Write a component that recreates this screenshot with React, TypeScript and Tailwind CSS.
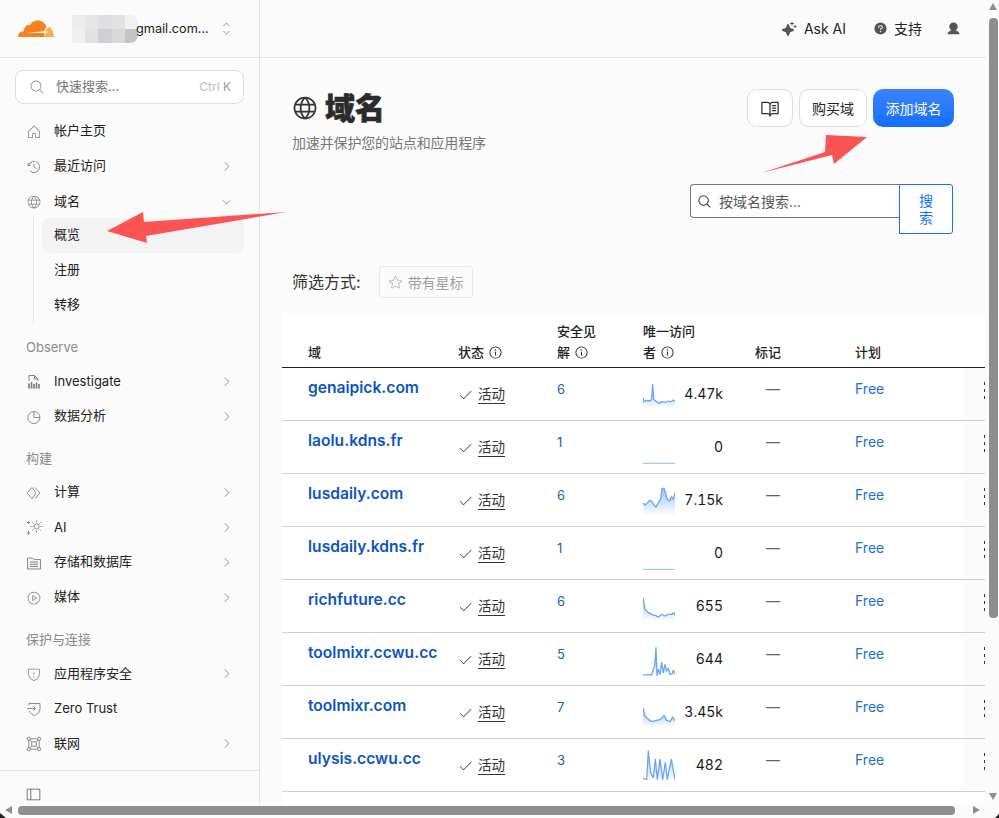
import React from "react";
import {
  PiHouseLight, PiClockCounterClockwiseLight, PiGlobeLight, PiCaretRightLight, PiCaretDownLight,
  PiCaretUpDownLight, PiMagnifyingGlassLight, PiMagnifyingGlass, PiSidebarSimpleLight,
  PiPlayCircleLight, PiShieldWarningLight, PiUserFill, PiQuestionFill, PiSparkleFill, PiStarLight,
  PiInfo, PiCheckLight, PiBookOpenText, PiGlobe,
} from "react-icons/pi";

const Logo = () => (
  <svg width="36" height="17" viewBox="0 0 36 17">
    <path d="M26 17C27 12 28.5 8 31 7C33.5 7.5 35.5 12 36 17Z" fill="#fbad41" />
    <path d="M0 17C0 14 1.5 11.5 5.5 11.5C6.5 6.5 9.5 4 11.5 5.5C13 2 17.5 0 21 0.5C25 1 27.5 3.5 28.5 7C27.5 10 26.5 13 26 17Z" fill="#f6821f" />
    <path d="M8 12.6L25 11.6L25 12.9Z" fill="#fff" />
    <path d="M27 8L27.8 11.2L31 12L27.8 12.8L27 16L26.2 12.8L23 12L26.2 11.2Z" fill="#fff" />
  </svg>
);

const IconFile = () => (
  <svg width="16" height="16" viewBox="0 0 16 16" fill="none" stroke="#808080" strokeWidth="1">
    <path d="M3 7V1.5H8.5L12 5V7M8.5 1.5V5H12" />
    <path d="M3 14.5V9.5M5.5 14.5V8M8 14.5V10M10.5 14.5V8.5M13 14.5V10" strokeWidth="1.7" />
  </svg>
);
const IconPie = () => (
  <svg width="16" height="16" viewBox="0 0 16 16" fill="none" stroke="#808080" strokeWidth="0.9">
    <path d="M7.9 2.5A6 6 0 1 0 13.9 8.5H7.9Z" />
    <path d="M7.9 2.5A6 6 0 0 1 13.9 8.5" />
  </svg>
);
const IconCompute = () => (
  <svg width="16" height="16" viewBox="0 0 16 16" fill="none" stroke="#808080" strokeWidth="0.9">
    <path d="M6 2.5L1 8L6 13.5L10 8Z" />
    <path d="M9 2.5L14 8L9 13.5" />
  </svg>
);
const IconAI = () => (
  <svg width="17" height="17" viewBox="0 0 17 17" fill="none" stroke="#808080" strokeWidth="0.9">
    <circle cx="10.5" cy="7.5" r="2.6" />
    <path d="M10.5 1.5V3.5M10.5 11.5V13.5M4.5 7.5H6.5M14.5 7.5H16.5M6.3 3.3L7.6 4.6M13.4 10.4L14.7 11.7M14.7 3.3L13.4 4.6M7.6 10.4L6.3 11.7" />
    <path d="M2.5 2V5M1 3.5H4M2.5 12V16M0.8 14H4.2" />
  </svg>
);
const IconStorage = () => (
  <svg width="16" height="16" viewBox="0 0 16 16" fill="none" stroke="#808080" strokeWidth="0.9">
    <path d="M1.5 14V3H6.5L8 4.5H14.5V14Z" fill="#f1f1f1" />
    <path d="M4 7H12M4 9.2H12M4 11.4H12" />
  </svg>
);
const IconZero = () => (
  <svg width="16" height="16" viewBox="0 0 16 16" fill="none" stroke="#808080" strokeWidth="0.9">
    <path d="M3 4.5V2.5H14V8C14 11.5 11 13.5 8.5 14.5C6.5 13.8 4.2 12.5 3.4 10" />
    <path d="M1 7.5H9.5M7 5L9.5 7.5L7 10" />
  </svg>
);
const IconNet = () => (
  <svg width="16" height="16" viewBox="0 0 16 16" fill="none" stroke="#808080" strokeWidth="0.9">
    <circle cx="2.8" cy="2.8" r="1.6" />
    <circle cx="13.2" cy="2.8" r="1.6" />
    <circle cx="2.8" cy="13.2" r="1.6" />
    <circle cx="13.2" cy="13.2" r="1.6" />
    <rect x="5.8" y="5.8" width="4.4" height="4.4" />
    <path d="M4.4 2.8H11.6M4.4 13.2H11.6M2.8 4.4V11.6M13.2 4.4V11.6M4 4L5.8 5.8M12 4L10.2 5.8M4 12L5.8 10.2M12 12L10.2 10.2" />
  </svg>
);

const ic = "text-[#808080]";

function NavRow({ icon, label, caret, latin }: { icon: React.ReactNode; label: string; caret?: "r" | "d"; latin?: boolean }) {
  return (
    <div className="flex h-[35px] items-center pl-[26px] pr-[26px] text-[13px] text-[#222]">
      <span className="flex w-[28px] shrink-0 items-center">{icon}</span>
      <span className={latin ? "flex-1" : "flex-1 -translate-y-px"}>{label}</span>
      {caret === "r" && <PiCaretRightLight size={13} className="text-[#8a8a8a]" />}
      {caret === "d" && <PiCaretDownLight size={13} className="text-[#8a8a8a]" />}
    </div>
  );
}

const Section = ({ label }: { label: string }) => (
  <div className="h-[41px] pl-[26px] pt-[14px] text-[13px] leading-[20px] text-[#8a8a8a]">{label}</div>
);

const mosaic = [
  ["#ececec", "#e6e6e8", "#dfdfe2", "#e2e2e4", "#f1f1f2"],
  ["#f0f0f0", "#e2e2e2", "#cfd0d3", "#d9d9db", "#c4c5c9"],
];

function Sidebar() {
  return (
    <aside className="flex h-full w-[260px] shrink-0 flex-col border-r border-[#e4e4e4]">
      <div className="flex h-[58px] shrink-0 items-center border-b border-[#e4e4e4] pl-[18px]">
        <span className="-mt-[1px] shrink-0"><Logo /></span>
        <div className="ml-[18px] flex h-[28px] w-[66px] shrink-0 flex-col overflow-hidden rounded-r-lg">
          {mosaic.map((r, i) => (
            <div key={i} className="flex h-[14px]">
              {r.map((c, j) => (
                <div key={j} className="h-[14px] flex-1" style={{ background: c }} />
              ))}
            </div>
          ))}
        </div>
        <span className="-ml-[2px] text-[12.7px] text-[#1d1d1d]">gmail.com...</span>
        <PiCaretUpDownLight size={15} className="ml-[10px] text-[#8a8a8a]" />
      </div>
      <div className="mx-[15px] mt-[12px] flex h-[34px] shrink-0 items-center rounded-lg border border-[#dddddd] bg-white pl-[13px] pr-[12px] text-[13px]">
        <PiMagnifyingGlassLight size={16} className="text-[#8a8a8a]" />
        <span className="ml-[11px] flex-1 text-[#777]">快速搜索...</span>
        <span className="text-[12px] text-[#bbb]">Ctrl <span className="text-[#999]">K</span></span>
      </div>
      <nav className="mt-[10px] flex-1">
        <NavRow icon={<PiHouseLight size={16} className={ic} />} label="帐户主页" />
        <NavRow icon={<PiClockCounterClockwiseLight size={16} className={ic} />} label="最近访问" caret="r" />
        <NavRow icon={<PiGlobeLight size={16} className={ic} />} label="域名" caret="d" latin />
        <div className="ml-[33px] -mt-[1px] mr-[15px] border-l border-[#e2e2e2] pl-[8px]">
          <div className="flex h-[35px] items-center rounded-lg bg-[#f3f3f3] pb-[1px] pl-[12px] text-[13px] text-[#222]">概览</div>
          <div className="flex h-[35px] items-center pb-[1px] pl-[12px] text-[13px] text-[#222]">注册</div>
          <div className="flex h-[35px] items-center pb-[1px] pl-[12px] text-[13px] text-[#222]">转移</div>
        </div>
        <Section label="Observe" />
        <NavRow icon={<IconFile />} label="Investigate" caret="r" latin />
        <NavRow icon={<IconPie />} label="数据分析" caret="r" />
        <Section label="构建" />
        <NavRow icon={<IconCompute />} label="计算" caret="r" />
        <NavRow icon={<IconAI />} label="AI" caret="r" latin />
        <NavRow icon={<IconStorage />} label="存储和数据库" caret="r" />
        <NavRow icon={<PiPlayCircleLight size={16} className={ic} />} label="媒体" caret="r" />
        <Section label="保护与连接" />
        <NavRow icon={<PiShieldWarningLight size={16} className={ic} />} label="应用程序安全" caret="r" latin />
        <NavRow icon={<IconZero />} label="Zero Trust" latin />
        <NavRow icon={<IconNet />} label="联网" caret="r" latin />
      </nav>
      <div className="h-[34px] shrink-0 border-t border-[#e4e4e4] pl-[25px] pt-[15px]">
        <PiSidebarSimpleLight size={17} className="text-[#555]" />
      </div>
    </aside>
  );
}

type Row = { name: string; sec: string; value: string; pts?: string };
const rows: Row[] = [
  { name: "genaipick.com", sec: "6", value: "4.47k", pts: "0,89 2,101 11,97 21,99 26,94 29,49 32,94 41,101 49,106 56,101 66,103 76,99 83,102 91,96 96,101" },
  { name: "laolu.kdns.fr", sec: "1", value: "0" },
  { name: "lusdaily.com", sec: "6", value: "7.15k", pts: "0,87 7,93 13,86 21,79 27,83 33,93 39,99 46,86 53,76 57,43 63,43 67,56 73,76 79,81 86,69 91,76 96,57" },
  { name: "lusdaily.kdns.fr", sec: "1", value: "0" },
  { name: "richfuture.cc", sec: "6", value: "655", pts: "0,53 6,88 16,98 26,103 36,106 46,111 56,103 66,108 76,103 86,103 93,98 96,106" },
  { name: "toolmixr.ccwu.cc", sec: "5", value: "644", pts: "0,127 16,124 26,126 31,109 35,99 39,44 42,127 46,109 51,124 56,89 61,119 66,94 71,114 76,106 81,124 88,122 91,112 96,122" },
  { name: "toolmixr.com", sec: "7", value: "3.45k", pts: "0,65 6,90 16,100 26,107 41,103 53,100 63,88 71,103 81,107 89,93 96,105" },
  { name: "ulysis.ccwu.cc", sec: "3", value: "482", pts: "0,118 11,121 16,36 23,101 31,116 37,61 43,121 51,61 59,121 67,71 73,121 85,61 96,121" },
];

function Spark({ pts, id }: { pts?: string; id: string }) {
  return (
    <svg width="32" height="33" viewBox="0 33 96 99" className="shrink-0">
      <defs>
        <linearGradient id={id} x1="0" y1="0" x2="0" y2="1">
          <stop offset="0" stopColor="#9cc3fb" />
          <stop offset="1" stopColor="#9cc3fb" stopOpacity="0" />
        </linearGradient>
      </defs>
      {pts ? (
        <>
          <polygon points={`0,124 ${pts} 96,124`} fill={`url(#${id})`} />
          <polyline points={pts} fill="none" stroke="#6aa5fb" strokeWidth="4" strokeLinejoin="round" />
        </>
      ) : (
        <line x1="0" x2="96" y1="127" y2="127" stroke="#8fbcfb" strokeWidth="3" />
      )}
    </svg>
  );
}

const grid = "grid grid-cols-[176px_99px_86px_112px_100px_108px_22px]";

function Table() {
  return (
    <div className="ml-[22px] mr-[1px] mt-[16px] flex-1 bg-white">
      <div className={`${grid} h-[54px] items-end border-b border-[#222] pb-[4px] text-[13px] font-medium leading-[21px] text-[#222]`}>
        <div className="pl-[26px]">域</div>
        <div className="flex items-center gap-[4px]">状态 <PiInfo size={15} /></div>
        <div>
          安全见
          <div className="flex items-center gap-[4px]">解 <PiInfo size={15} /></div>
        </div>
        <div>
          唯一访问
          <div className="flex items-center gap-[4px]">者 <PiInfo size={15} /></div>
        </div>
        <div>标记</div>
        <div>计划</div>
        <div />
      </div>
      {rows.map((r, i) => (
        <div key={r.name} className={`${grid} h-[53px] items-start border-b border-[#d0d0d0] text-[14px]`}>
          <div className="pl-[26px] pt-[8px] text-[15.6px] font-semibold leading-[24px] text-[#0b55c2]">{r.name}</div>
          <div className="flex items-center pt-[16px] leading-[20px] text-[#333]">
            <PiCheckLight size={15} className="text-[#333]" />
            <span className="ml-[5px] h-[20px] border-b border-[#333] text-[13.5px] leading-[20px]">活动</span>
          </div>
          <div className="pt-[11px] text-[13px] leading-[20px] text-[#1a5fb4]">{r.sec}</div>
          <div className="flex items-start pt-[11px]">
            <Spark pts={r.pts} id={`g${i}`} />
            <span className="mt-[5px] w-[48px] text-right leading-[20px] tabular-nums text-[#1a1a1a]">{r.value}</span>
          </div>
          <div className="pl-[11px] pt-[11px] leading-[20px] text-[#666]">—</div>
          <div className="pt-[11px] leading-[20px] text-[#2170d0]">Free</div>
          <div className="flex h-[52px] flex-col items-end gap-[4px] bg-[#fafafa] pr-[0px] pt-[14px]">
            <span className="h-[3px] w-[1.5px] bg-[#333]" />
            <span className="h-[3px] w-[1.5px] bg-[#333]" />
            <span className="h-[3px] w-[1.5px] bg-[#333]" />
          </div>
        </div>
      ))}
    </div>
  );
}

function Main() {
  return (
    <main className="flex h-full min-w-0 flex-1 flex-col overflow-hidden">
      <div className="flex h-[58px] shrink-0 items-center justify-end border-b border-[#e4e4e4] pr-[25px] text-[14px] text-[#222]">
        <PiSparkleFill size={16} className="text-[#555]" />
        <span className="ml-[7px]">Ask AI</span>
        <PiQuestionFill size={15} className="ml-[27px] text-[#555]" />
        <span className="ml-[6px]">支持</span>
        <PiUserFill size={15} className="ml-[24px] text-[#555]" />
      </div>
      <div className="flex justify-between pl-[32px] pr-[32px] pt-[31px]">
        <div>
          <div className="flex h-[38px] items-center">
            <PiGlobe size={28} className="-ml-[1px] text-[#333]" />
            <h1 className="ml-[6px] text-[30px] font-black leading-[38px] text-[#2b2b2b] [-webkit-text-stroke:0.6px_#2b2b2b]">域名</h1>
          </div>
          <p className="mt-[6px] text-[14px] leading-[20px] tracking-[-0.15px] text-[#777]">加速并保护您的站点和应用程序</p>
        </div>
        <div className="flex gap-[6px]">
          <button className="flex h-[38px] w-[46px] items-center justify-center rounded-[10px] border border-[#dedede] bg-white text-[#333]"><PiBookOpenText size={20} /></button>
          <button className="h-[38px] w-[68px] rounded-[10px] border border-[#dedede] bg-white text-[14px] text-[#222]">购买域</button>
          <button className="h-[38px] w-[81px] rounded-[10px] bg-gradient-to-b from-[#3b84f8] to-[#0f6fff] text-[14px] text-white">添加域名</button>
        </div>
      </div>
      <div className="mt-[31px] flex items-start justify-end pr-[33px]">
        <div className="flex h-[34px] w-[209px] items-center rounded-l-[4px] border border-r-0 border-[#777] bg-white pl-[6px] text-[14px] text-[#555]">
          <PiMagnifyingGlass size={15} className="text-[#333]" />
          <span className="ml-[7px]">按域名搜索...</span>
        </div>
        <button className="h-[50px] w-[54px] rounded-r-[3px] border border-[#0f6fff] bg-white px-[18px] text-[14px] leading-[17px] text-[#0f6fff]">搜索</button>
      </div>
      <div className="mt-[32px] flex h-[32px] items-center pl-[32px]">
        <span className="text-[16px] text-[#333]">筛选方式:</span>
        <div className="ml-[18px] flex h-[32px] w-[94px] items-center rounded-[3px] border border-[#e8e8e8] pl-[8px] text-[14px] text-[#a0a0a0]">
          <PiStarLight size={15} className="text-[#aaa]" />
          <span className="ml-[5px]">带有星标</span>
        </div>
      </div>
      <Table />
    </main>
  );
}

function VScroll() {
  return (
    <div className="flex h-full w-[13px] shrink-0 flex-col items-center pl-[1px] pt-[3px]">
      <div className="h-0 w-0 border-x-[4.5px] border-b-[7px] border-x-transparent border-b-[#8e8e8e]" />
      <div className="mt-[8px] h-[600px] w-[9px] rounded-[4px] bg-[#8e8e8e]" />
      <div className="mt-[175px] h-0 w-0 border-x-[4.5px] border-t-[7px] border-x-transparent border-t-[#8e8e8e]" />
    </div>
  );
}

function HScroll() {
  return (
    <div className="flex h-[14px] shrink-0 items-start pl-[5px] pt-[2px]">
      <div className="h-0 w-0 border-y-[4.5px] border-r-[7px] border-y-transparent border-r-[#8e8e8e]" />
      <div className="ml-[6px] h-[9px] w-[937px] rounded-[4px] bg-[#8e8e8e]" />
      <div className="ml-[18px] h-0 w-0 border-y-[4.5px] border-l-[7px] border-y-transparent border-l-[#8e8e8e]" />
    </div>
  );
}

function Overlay() {
  return (
    <svg className="pointer-events-none absolute left-0 top-0" width="999" height="818">
      <polygon points="107,231 143,212 144,222 286,212 146,236 147,243" fill="#fc5353" />
      <polygon points="761,173 825,152 826,135 867,137 834,164 832,155" fill="#fc5353" />
      <polygon points="0,813 0,818 6,818" fill="#222" />
      <polygon points="999,814 999,818 995,818" fill="#222" />
    </svg>
  );
}

export default function App() {
  return (
    <div className="relative flex h-[818px] w-[999px] flex-col overflow-hidden bg-[#fbfbfb] [font-family:Inter,'Noto_Sans_CJK_SC',sans-serif]">
      <div className="flex h-[804px] shrink-0">
        <Sidebar />
        <Main />
        <VScroll />
      </div>
      <HScroll />
      <Overlay />
    </div>
  );
}
